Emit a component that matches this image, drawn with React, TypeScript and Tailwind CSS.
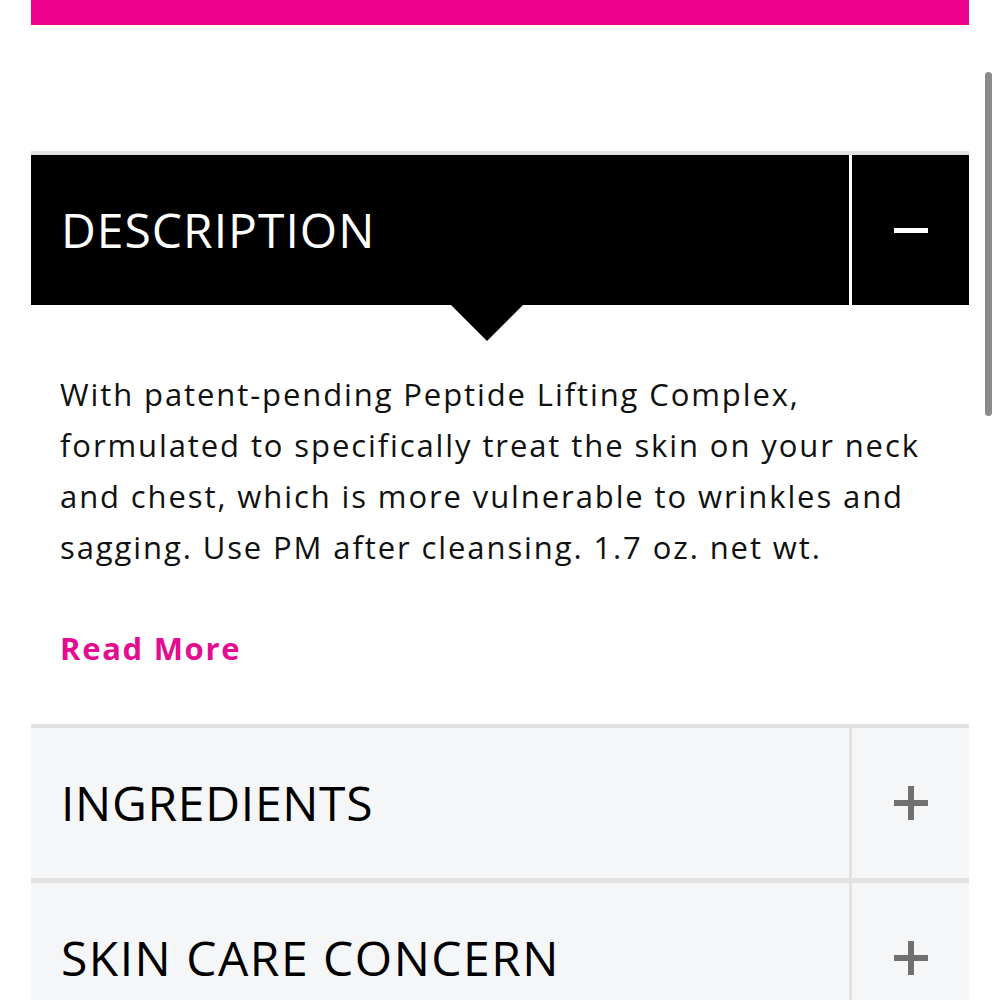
export default function App() {
  const font = { fontFamily: '"Open Sans", Lato, sans-serif' };
  return (
    <div className="relative h-[1000px] w-[1000px] overflow-hidden bg-white" style={font}>
      <div className="mx-[31px] h-[25px] bg-[#ec008c]" />
      <div className="absolute left-[985px] top-[72px] h-[344px] w-[7px] rounded-full bg-[#8a8a8a]" />
      <div className="mx-[31px] mt-[126px]">
        <div className="h-[4px] bg-[#e2e2e2]" />
        <div className="relative flex h-[150px] bg-black">
          <div className="flex flex-1 items-center pl-[30px] text-[48px] tracking-[1px] text-white">DESCRIPTION</div>
          <div className="w-[3px] bg-white" />
          <div className="flex w-[117px] items-center justify-center">
            <div className="h-[5px] w-[34px] bg-white" />
          </div>
          <div className="absolute left-[420px] top-[150px] h-0 w-0 border-x-[36px] border-t-[36px] border-x-transparent border-t-black" />
        </div>
        <div className="px-[29px] pt-[64px] text-[31px] leading-[51px] tracking-[1.9px] text-[#111]">
          With patent-pending Peptide Lifting Complex, formulated to specifically treat the skin on your neck and chest, which is more vulnerable to wrinkles and sagging. Use PM after cleansing. 1.7 oz. net wt.
        </div>
        <div className="px-[29px] pt-[50px] text-[31px] font-bold leading-[51px] tracking-[1.7px] text-[#e20d8f]">Read More</div>
        <div className="mt-[50px] h-[4px] bg-[#e2e2e2]" />
        <div className="flex h-[150px] bg-[#f5f6f8]">
          <div className="flex flex-1 items-center pl-[30px] text-[48px] tracking-[0.7px] text-black">INGREDIENTS</div>
          <div className="w-[3px] bg-[#e2e2e2]" />
          <div className="flex w-[117px] items-center justify-center">
            <div className="relative h-[34px] w-[34px]">
              <div className="absolute left-0 top-[14px] h-[6px] w-[34px] bg-[#707070]" />
              <div className="absolute left-[14px] top-0 h-[34px] w-[6px] bg-[#707070]" />
            </div>
          </div>
        </div>
        <div className="h-[5px] bg-[#e2e2e2]" />
        <div className="flex h-[150px] bg-[#f5f6f8]">
          <div className="flex flex-1 items-center pl-[30px] text-[48px] tracking-[1.5px] text-black">SKIN CARE CONCERN</div>
          <div className="w-[3px] bg-[#e2e2e2]" />
          <div className="flex w-[117px] items-center justify-center">
            <div className="relative h-[34px] w-[34px]">
              <div className="absolute left-0 top-[14px] h-[6px] w-[34px] bg-[#707070]" />
              <div className="absolute left-[14px] top-0 h-[34px] w-[6px] bg-[#707070]" />
            </div>
          </div>
        </div>
      </div>
    </div>
  );
}
